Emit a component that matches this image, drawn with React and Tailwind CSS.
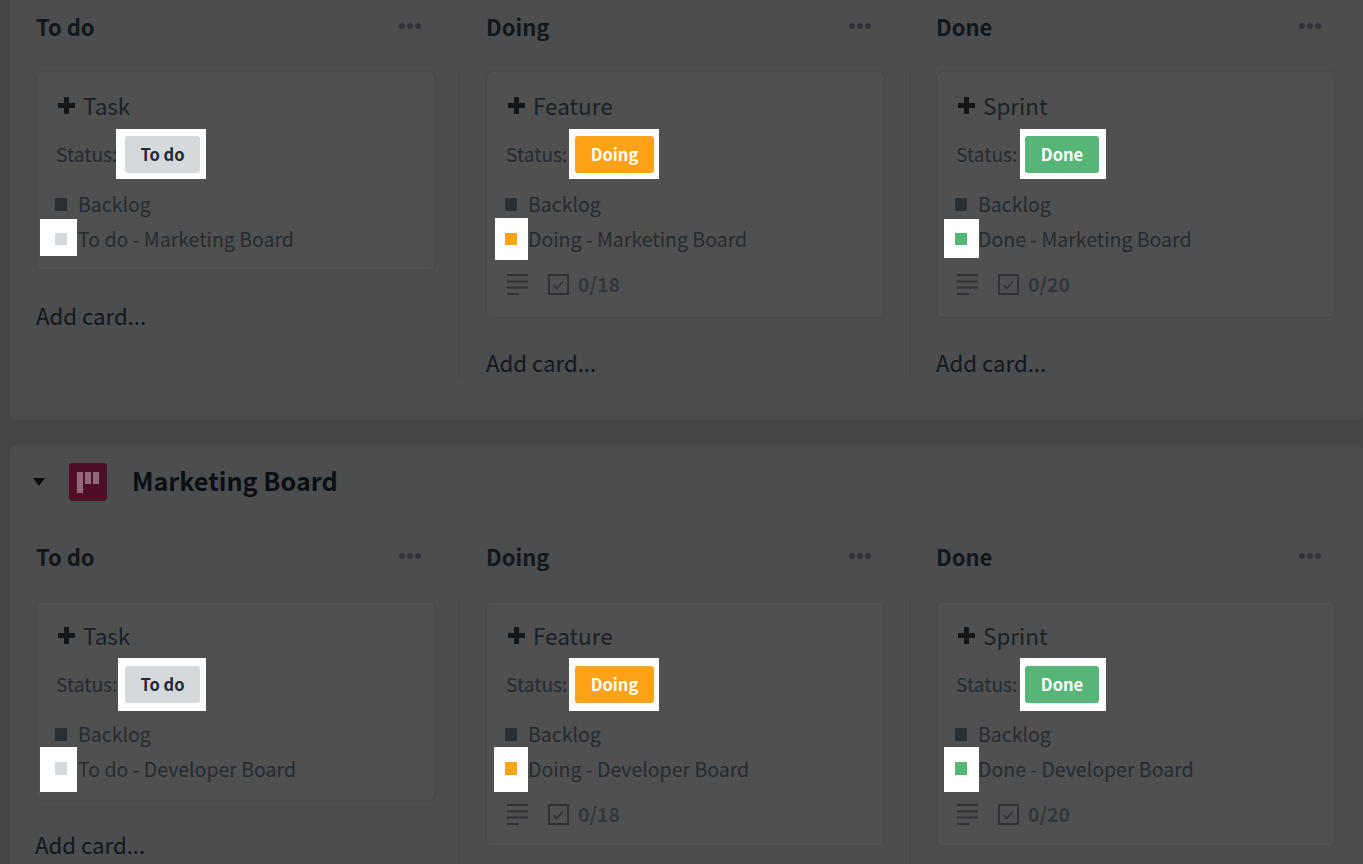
const FONT = { fontFamily: '"Noto Sans CJK JP", "Noto Sans", sans-serif' };

const columns = [
    {
        title: 'To do', card: 'Task', count: null,
        badge: 'bg-[#d5d9dc] text-[#1e2a36] w-[75px]',
        dot: 'bg-[#d5d9dc]',
        spots: [
            { badge: '-left-[9px] -right-[6px] -top-[7px] -bottom-[6px]', dot: '-left-[15px] -right-[10px] -top-[14px] -bottom-[11px]' },
            { badge: '-left-[7px] -right-[6px] -top-[8px] -bottom-[8px]', dot: '-left-[15px] -right-[10px] -top-[15px] -bottom-[17px]' },
        ],
    },
    {
        title: 'Doing', card: 'Feature', count: '0/18',
        badge: 'bg-[#ffa216] text-white w-[79px]',
        dot: 'bg-[#ffa216]',
        spots: [
            { badge: '-left-[6px] -right-[5px] -top-[7px] -bottom-[6px]', dot: '-left-[10px] -right-[11px] -top-[15px] -bottom-[15px]' },
            { badge: '-left-[6px] -right-[5px] -top-[8px] -bottom-[8px]', dot: '-left-[11px] -right-[11px] -top-[15px] -bottom-[17px]' },
        ],
    },
    {
        title: 'Done', card: 'Sprint', count: '0/20',
        badge: 'bg-[#57b677] text-white w-[74px]',
        dot: 'bg-[#57b677]',
        spots: [
            { badge: '-left-[5px] -right-[7px] -top-[7px] -bottom-[6px]', dot: '-left-[11px] -right-[12px] -top-[14px] -bottom-[13px]' },
            { badge: '-left-[5px] -right-[7px] -top-[8px] -bottom-[8px]', dot: '-left-[11px] -right-[12px] -top-[15px] -bottom-[17px]' },
        ],
    },
];

function Dots() {
    return (
        <div className="flex items-center gap-[2px]">
            <span className="w-[6px] h-[6px] rounded-full bg-[#2f3338]" />
            <span className="w-[6px] h-[6px] rounded-full bg-[#2f3338]" />
            <span className="w-[6px] h-[6px] rounded-full bg-[#2f3338]" />
        </div>
    );
}

function PlusIcon() {
    return (
        <svg width="17" height="17" viewBox="0 0 17 17" fill="none" stroke="#14171a" strokeWidth="5" className="mr-[8px]">
            <path d="M8.5 0v17M0 8.5h17" />
        </svg>
    );
}

function LinesIcon() {
    return (
        <svg width="21" height="21" viewBox="0 0 21 21" fill="none" stroke="#2f3337" strokeWidth="2">
            <path d="M0 1h21M0 7.5h21M0 13.5h21M0 20h12" />
        </svg>
    );
}

function CheckIcon() {
    return (
        <svg width="21" height="21" viewBox="0 0 21 21" fill="none" stroke="#2f3337">
            <rect x="1" y="1" width="19" height="19" strokeWidth="2" />
            <path d="M5.5 11l3 3.5 6.5-7" strokeWidth="1.6" />
        </svg>
    );
}

function Card({ col, board, row }) {
    const spot = col.spots[row];
    const bottom = !col.count ? 'pb-[13px]' : row === 1 ? 'pb-[19px]' : 'pb-[20px]';
    return (
        <div className={`w-[399px] rounded-[6px] border border-[#474848] bg-[#505050] pl-[19px] pt-[18px] text-[19.5px] text-[#272b2f] ${bottom}`}>
            <div className="flex items-center h-[30px] pl-[2px] text-[22.5px] leading-[30px] text-[#1d2125]">
                <PlusIcon />
                <span>{col.card}</span>
            </div>
            <div className="flex items-center mt-[16px] h-[37px]">
                <span className="w-[69px] text-[19.2px]">Status:</span>
                <div className="relative">
                    <span className={`absolute bg-white ${spot.badge}`} />
                    <span className={`relative flex items-center justify-center h-[37px] rounded-[3px] text-[16.5px] font-bold ${col.badge}`}>
                        {col.title}
                    </span>
                </div>
            </div>
            <div className="flex items-center mt-[14px] h-[34px]">
                <span className="w-[12px] h-[13px] -ml-[1px] mr-[11px] rounded-[1px] bg-[#292f33]" />
                <span>Backlog</span>
            </div>
            <div className="flex items-center h-[35px] mb-[1px]">
                <div className={`relative w-[12px] -ml-[1px] mr-[11px] ${row === 1 ? 'h-[13px]' : 'h-[12px]'}`}>
                    <span className={`absolute bg-white ${spot.dot}`} />
                    <span className={`absolute inset-0 ${col.dot}`} />
                </div>
                <span className="relative">{col.title} - {board}</span>
            </div>
            {col.count && (
                <div className="flex items-center mt-[15px] h-[26px] pl-[1px]">
                    <LinesIcon />
                    <span className="ml-[20px]"><CheckIcon /></span>
                    <span className="ml-[9px] text-[19.5px] font-bold text-[#33373b]">{col.count}</span>
                </div>
            )}
        </div>
    );
}

function Column({ col, board, row, last }) {
    // the add link of the taller cards falls below the fold in the lower board
    const showAdd = !(row === 1 && col.count);
    return (
        <div className={`flex flex-col ${last ? 'w-[399px]' : 'w-[450px]'}`}>
            <div className="flex items-center justify-between w-[399px] h-[30px] pr-[14px] text-[22px] font-bold text-[#14171a]">
                <span>{col.title}</span>
                <Dots />
            </div>
            <div className={`flex-1 mt-[30px] ${last ? '' : 'w-[424px] border-r border-[#454647]'}`}>
                <Card col={col} board={board} row={row} />
                {showAdd && (
                    <div className={`h-[30px] leading-[30px] text-[22.2px] text-[#14171a] ${row === 1 ? 'mt-[28px] -ml-[1px]' : 'mt-[29px]'}`}>
                        Add card...
                    </div>
                )}
            </div>
        </div>
    );
}

function MarketingHeader() {
    return (
        <div className="flex items-center h-[38px] pl-[23px] mb-[40px]">
            <span className="w-0 h-0 border-l-[6px] border-r-[6px] border-t-[8px] border-l-transparent border-r-transparent border-t-[#0a0d10]" />
            <div className="ml-[24px] flex gap-[2px] w-[38px] h-[38px] rounded-[3px] bg-[#4f0f28] pl-[8px] pt-[9px]">
                <span className="w-[6px] h-[21px] bg-[#8f6a7b]" />
                <span className="w-[6px] h-[12px] bg-[#8f6a7b]" />
                <span className="w-[6px] h-[12px] bg-[#8f6a7b]" />
            </div>
            <span className="ml-[25px] pb-[2px] text-[25.2px] font-bold text-[#0b0f14]">Marketing Board</span>
        </div>
    );
}

export default function App() {
    return (
        <div className="h-[864px] overflow-hidden bg-[#454647] pl-[10px]" style={FONT}>
            <section className="h-[420px] rounded-b-[6px] bg-[#4c4d4e] pl-[26px] pt-[11px]">
                <div className="flex h-[369px]">
                    {columns.map((col, i) => (
                        <Column key={col.title} col={col} board="Marketing Board" row={0} last={i === 2} />
                    ))}
                </div>
            </section>
            <section className="mt-[25px] h-[500px] rounded-t-[6px] bg-[#4c4d4e] pt-[18px]">
                <MarketingHeader />
                <div className="flex pl-[26px] h-[401px]">
                    {columns.map((col, i) => (
                        <Column key={col.title} col={col} board="Developer Board" row={1} last={i === 2} />
                    ))}
                </div>
            </section>
        </div>
    );
}
